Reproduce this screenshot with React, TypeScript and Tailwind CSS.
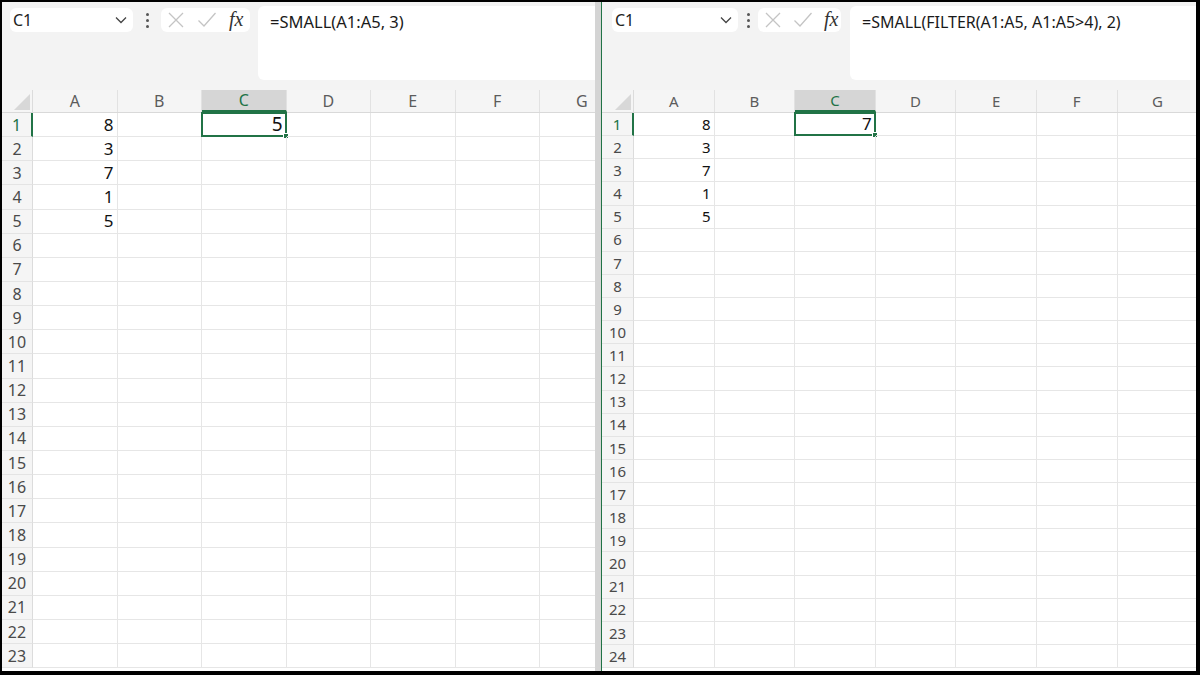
import React from "react";

const cols = ["A", "B", "C", "D", "E", "F", "G"];
const values = [8, 3, 7, 1, 5];

type PaneProps = {
  formula: string;
  result: number;
  rowCount: number;
  wide: boolean;
};

const XIcon = () => (
  <svg width="18" height="18" viewBox="0 0 18 18" fill="none" stroke="#c4c4c4" strokeWidth="1.3">
    <path d="M2 2 L16 16 M16 2 L2 16" />
  </svg>
);

const CheckIcon = () => (
  <svg width="20" height="18" viewBox="0 0 20 18" fill="none" stroke="#c4c4c4" strokeWidth="1.3">
    <path d="M1.5 9.5 L7 15 L18.5 2" />
  </svg>
);

const Chevron = () => (
  <svg width="12" height="8" viewBox="0 0 12 8" fill="none" stroke="#444" strokeWidth="1.3">
    <path d="M1 1.5 L6 6.5 L11 1.5" />
  </svg>
);

const Dots = () => (
  <div className="flex flex-col gap-[3px] items-center">
    <span className="w-[3px] h-[3px] rounded-full bg-[#555]" />
    <span className="w-[3px] h-[3px] rounded-full bg-[#555]" />
    <span className="w-[3px] h-[3px] rounded-full bg-[#555]" />
  </div>
);

const Pane = ({ formula, result, rowCount, wide }: PaneProps) => {
  const rowH = wide ? "h-[24.15px]" : "h-[23.13px]";
  const colW = wide ? "w-[84.5px]" : "w-[80.6px]";
  const headW = wide ? "w-[31px]" : "w-[32px]";
  const cellText = wide ? "text-[17px]" : "text-[15px]";
  const selText = wide ? "text-[19px]" : "text-[17px]";
  const headText = wide ? "text-[16px]" : "text-[15px]";

  return (
    <div className="flex-1 flex flex-col overflow-hidden bg-white min-w-0">
      {/* formula bar */}
      <div className={`h-[88px] shrink-0 bg-[#f3f3f3] flex items-start pt-1 ${wide ? "pl-2" : "pl-[10px]"}`}>
        <div className={`mt-0.5 h-6 bg-white rounded-md flex items-center justify-between pl-[3px] pr-[6px] ${wide ? "w-[123px]" : "w-[126px]"}`}>
          <span className="text-[16px] text-[#222]">C1</span>
          <Chevron />
        </div>
        <div className={`mt-0.5 h-6 flex items-center justify-center ${wide ? "w-[28px]" : "w-[20px]"}`}>
          <Dots />
        </div>
        <div className={`mt-0.5 h-6 bg-white rounded-md flex items-center pl-[6px] ${wide ? "w-[89px] gap-[12px]" : "w-[83px] gap-[11px]"}`}>
          <XIcon />
          <CheckIcon />
          <span className="text-[20px] italic text-[#333] leading-none -mt-0.5" style={{ fontFamily: "'Liberation Serif', serif" }}>
            fx
          </span>
        </div>
        <div className={`flex-1 h-[74px] bg-white rounded-l-md pt-[4px] pl-3 ${wide ? "ml-2" : "ml-[9px]"}`}>
          <span className={`${wide ? "text-[16.5px]" : "text-[16px]"} text-[#1a1a1a]`}>{formula}</span>
        </div>
      </div>

      {/* column header */}
      <div className="h-[23px] shrink-0 flex bg-[#f5f5f5] border-b border-[#d9d9d9]">
        <div className={`${headW} shrink-0 relative border-r border-[#dcdcdc]`}>
          <svg className="absolute right-[2px] bottom-[2px]" width="16" height="16" viewBox="0 0 16 16">
            <path d="M16 0 L16 16 L0 16 Z" fill="#d8d8d8" />
          </svg>
        </div>
        {cols.map((c) => (
          <div
            key={c}
            className={`${colW} shrink-0 flex items-center justify-center ${headText} border-r border-[#e2e2e2] ${
              c === "C" ? "bg-[#d6d6d6] text-[#217346] border-b-2 border-b-[#217346]" : "text-[#5c5c5c]"
            }`}
          >
            {c}
          </div>
        ))}
      </div>

      {/* rows */}
      {Array.from({ length: rowCount }, (_, i) => i + 1).map((r) => (
        <div key={r} className={`${rowH} shrink-0 flex`}>
          <div
            className={`${headW} shrink-0 flex items-center justify-center ${headText} bg-[#f5f5f5] border-b border-[#e4e4e4] ${
              r === 1 ? "text-[#217346] border-r-2 border-r-[#217346]" : "text-[#4a4a4a] border-r border-r-[#dcdcdc]"
            }`}
          >
            {r}
          </div>
          {cols.map((c, ci) => {
            const selected = r === 1 && c === "C";
            const val = ci === 0 && r <= values.length ? values[r - 1] : selected ? result : null;
            return (
              <div
                key={c}
                className={`${colW} shrink-0 relative flex items-center justify-end pr-[3px] ${selected ? selText : cellText} text-[#111] border-r border-b border-[#e6e6e6]`}
              >
                {val}
                {selected && (
                  <>
                    <div className="absolute -left-px -top-px -right-px -bottom-px border-2 border-[#217346]" />
                    <div className="absolute -right-[3px] -bottom-[3px] w-[6px] h-[6px] bg-[#217346] border border-white" />
                  </>
                )}
              </div>
            );
          })}
        </div>
      ))}
    </div>
  );
};

export default function App() {
  return (
    <div
      className="w-[1200px] h-[675px] bg-black pt-[2px] pl-[2px] pr-[4px] pb-[4px] overflow-hidden"
      style={{ fontFamily: "'Noto Sans', 'Open Sans', sans-serif" }}
    >
      <div className="w-full h-full flex overflow-hidden">
        <Pane formula="=SMALL(A1:A5, 3)" result={5} rowCount={23} wide />
        <div className="w-[6px] shrink-0 bg-[#d4d4d4]" />
        <div className="w-px shrink-0 bg-[#217346]" />
        <div className="w-[594px] shrink-0 flex">
          <Pane formula="=SMALL(FILTER(A1:A5, A1:A5>4), 2)" result={7} rowCount={24} wide={false} />
        </div>
      </div>
    </div>
  );
}
